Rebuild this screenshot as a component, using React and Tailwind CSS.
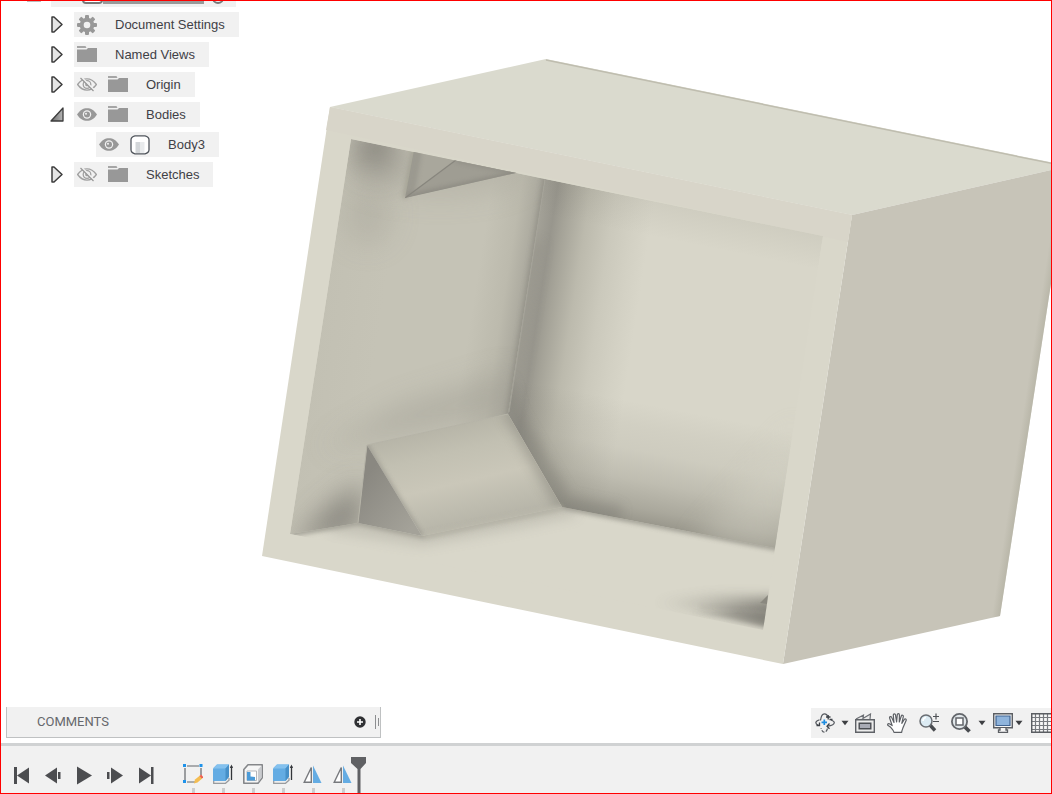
import React, { useState } from 'react';

const browserItems = [
  { name: 'Document Settings', icon: 'gear' },
  { name: 'Named Views', icon: 'folder' },
  { name: 'Origin', icon: 'folder', visible: false },
  { name: 'Bodies', icon: 'folder', visible: true, open: true },
  { name: 'Body3', icon: 'body', visible: true, child: true },
  { name: 'Sketches', icon: 'folder', visible: false },
];

const features = ['sketch', 'extrude', 'shell', 'extrude', 'mirror', 'mirror'];

function Svg({ w = 20, h = 20, label, children }) {
  return (
    <svg width={w} height={h} viewBox={`0 0 ${w} ${h}`} fill="none" className="shrink-0" role={label ? 'img' : undefined} aria-label={label} aria-hidden={label ? undefined : true}>
      {children}
    </svg>
  );
}

/* ---------- browser tree icons ---------- */

function Gear() {
  return (
    <Svg>
      <g fill="#989898">
        <rect x="8" y="0" width="4" height="20" rx="1" />
        <rect x="8" y="0" width="4" height="20" rx="1" transform="rotate(45 10 10)" />
        <rect x="8" y="0" width="4" height="20" rx="1" transform="rotate(90 10 10)" />
        <rect x="8" y="0" width="4" height="20" rx="1" transform="rotate(135 10 10)" />
        <circle cx="10" cy="10" r="7.3" />
      </g>
      <circle cx="10" cy="10" r="3.3" fill="#f1f1f1" />
    </Svg>
  );
}

function Folder() {
  return (
    <Svg>
      <path d="M0 1h8.500l1 2H0z" fill="#a6a6a6" />
      <path d="M0 4.500h9.500L11 3h9v14H0z" fill="#989898" />
    </Svg>
  );
}

function BodyIcon() {
  return (
    <Svg>
      <path d="M5 .8h10q4 1 4 4v10q0 3-4 4H5q-4-1-4-4v-10q0-3 4-4z" fill="#fff" stroke="#50555c" strokeWidth="1.300" />
      <path d="M5.500 7h5v11h-5z" fill="#d3d6d9" />
      <path d="M10.500 7h4v11h-4z" fill="#e9ebed" />
    </Svg>
  );
}

function Eye({ on }) {
  if (on) {
    return (
      <Svg label="Visible">
        <path d="M0 9.500C3 5 6 3.200 10 3.200s7 1.800 10 6.300c-3 4.500-6 6.300-10 6.300S3 14 0 9.500z" fill="#989898" />
        <circle cx="10" cy="9.500" r="4.200" fill="#f1f1f1" />
        <circle cx="10" cy="9.500" r="3" fill="#989898" />
        <circle cx="9" cy="8.800" r="1" fill="#f1f1f1" />
      </Svg>
    );
  }
  return (
    <Svg label="Hidden">
      <g stroke="#a0a0a0" strokeWidth="1.300">
        <path d="M.6 9.500C3.500 5.500 6.500 3.800 10 3.800s6.500 1.700 9.400 5.700c-2.900 4-5.900 5.700-9.400 5.700S3.500 13.500.6 9.500z" />
        <circle cx="10" cy="9.500" r="3.800" />
        <circle cx="10" cy="9.500" r="1.200" />
      </g>
      <path d="M5 3l13 13" stroke="#f1f1f1" strokeWidth="2" />
      <path d="M3.500 3l13 13" stroke="#989898" strokeWidth="1.300" />
    </Svg>
  );
}

function Disclosure({ open }) {
  return (
    <Svg w={14} h={18}>
      <defs>
        <linearGradient id="openFill" x1="0" y1="0" x2="1" y2="0">
          <stop offset="0" stopColor="#6b6b6b" />
          <stop offset="1" stopColor="#b5b5b5" />
        </linearGradient>
      </defs>
      {open ? (
        <path d="M13 2v13H1z" fill="url(#openFill)" stroke="#3c3c3c" strokeWidth="1.300" strokeLinejoin="round" />
      ) : (
        <path d="M2 1h2l8 7.500L4 16H2z" fill="#e4e4e4" stroke="#3c3c3c" strokeWidth="1.500" strokeLinejoin="round" />
      )}
    </Svg>
  );
}

const treeIcons = { gear: Gear, folder: Folder, body: BodyIcon };

function TreeRow({ item }) {
  const [open, setOpen] = useState(!!item.open);
  const [visible, setVisible] = useState(item.visible);
  const Icon = treeIcons[item.icon];
  return (
    <li className={`flex h-[25px] items-center ${item.child ? 'pl-[95px]' : 'gap-2.5 pl-[49px]'}`}>
      {!item.child && (
        <button type="button" aria-label={`Toggle ${item.name}`} aria-expanded={open} onClick={() => setOpen(!open)}>
          <Disclosure open={open} />
        </button>
      )}
      <div className="flex h-full items-center bg-[#f1f1f1] pr-3.5 pl-[3px]">
        {visible !== undefined && (
          <button type="button" className="mr-[11px]" aria-label={`Show or hide ${item.name}`} onClick={() => setVisible(!visible)}>
            <Eye on={visible} />
          </button>
        )}
        <Icon />
        <span className="ml-[18px] whitespace-nowrap">{item.name}</span>
      </div>
    </li>
  );
}

function Browser() {
  return (
    <ul className="relative -mt-[19px] flex flex-col gap-[5px] text-[13px] text-[#3f4046]" aria-label="Browser">
      {/* root component, scrolled mostly out of view */}
      <li className="flex h-[25px] items-end pl-[26px]">
        <span className="mb-[5px] h-3 w-3.5 bg-[#bdbdbd]" />
        <div className="ml-2.5 flex h-full w-[185px] items-end bg-[#f1f1f1] pb-[3px] pl-[31px]">
          <span className="h-5 w-[21px] rounded-b-sm border-2 border-[#777] bg-white" />
          <span className="h-5 w-[101px] bg-[#999]" />
          <span className="ml-2 h-3 w-3 rounded-full border-2 border-[#777]" />
        </div>
      </li>
      {browserItems.map((item) => <TreeRow key={item.name} item={item} />)}
    </ul>
  );
}

/* ---------- model ---------- */

function Model() {
  return (
    <svg className="absolute inset-0 h-full w-full" viewBox="1 1 1050 742" role="img" aria-label="Body3, open box with corner brackets">
      <defs>
        <clipPath id="opening"><path d="M351 139L823 236L763 630L290 534z" /></clipPath>
        <clipPath id="leftWall"><path d="M351 139L545 179L508 414L367 445L358 523L290 534z" /></clipPath>
        <clipPath id="backWall"><path d="M545 179L823 236L775 548L562 507L508 414z" /></clipPath>
        <clipPath id="ramp"><path d="M367 445L508 414L562 507L422 536z" /></clipPath>
        <clipPath id="rampSide"><path d="M367 445L422 536L358 523z" /></clipPath>
        <clipPath id="floor"><path d="M290 534L358 523L422 536L562 507L775 548L763 630z" /></clipPath>
        <clipPath id="bracket"><path d="M414 150L520 172L405 198z" /></clipPath>
        <filter id="b2" filterUnits="userSpaceOnUse" x="250" y="100" width="620" height="560"><feGaussianBlur stdDeviation="2" /></filter>
        <filter id="b6" filterUnits="userSpaceOnUse" x="250" y="100" width="620" height="560"><feGaussianBlur stdDeviation="6" /></filter>
        <filter id="b14" filterUnits="userSpaceOnUse" x="250" y="60" width="620" height="600"><feGaussianBlur stdDeviation="14" /></filter>
        <linearGradient id="leftFill" gradientUnits="userSpaceOnUse" x1="320" y1="300" x2="528" y2="333">
          <stop offset="0" stopColor="#c2c0b3" />
          <stop offset=".3" stopColor="#c5c3b6" />
          <stop offset=".72" stopColor="#c5c3b6" />
          <stop offset=".86" stopColor="#bcbaad" />
          <stop offset=".95" stopColor="#aba99e" />
          <stop offset="1" stopColor="#98968d" />
        </linearGradient>
        <linearGradient id="backFill" gradientUnits="userSpaceOnUse" x1="527" y1="297" x2="637" y2="314">
          <stop offset="0" stopColor="#a3a197" />
          <stop offset=".12" stopColor="#98968d" />
          <stop offset=".22" stopColor="#a5a398" />
          <stop offset=".42" stopColor="#bcbaad" />
          <stop offset=".65" stopColor="#cbc9bc" />
          <stop offset=".85" stopColor="#d3d1c4" />
          <stop offset="1" stopColor="#d8d6c9" />
        </linearGradient>
        <linearGradient id="backLow" gradientUnits="userSpaceOnUse" x1="668" y1="528" x2="690" y2="412">
          <stop offset="0" stopColor="#55534a" stopOpacity=".48" />
          <stop offset=".12" stopColor="#55534a" stopOpacity=".35" />
          <stop offset=".35" stopColor="#55534a" stopOpacity=".19" />
          <stop offset=".6" stopColor="#55534a" stopOpacity=".08" />
          <stop offset=".8" stopColor="#55534a" stopOpacity=".05" />
          <stop offset="1" stopColor="#55534a" stopOpacity="0" />
        </linearGradient>
        <linearGradient id="backTop" gradientUnits="userSpaceOnUse" x1="700" y1="210" x2="693" y2="245">
          <stop offset="0" stopColor="#55534a" stopOpacity=".07" />
          <stop offset="1" stopColor="#55534a" stopOpacity="0" />
        </linearGradient>
        <linearGradient id="rampFill" gradientUnits="userSpaceOnUse" x1="440" y1="428" x2="464" y2="530">
          <stop offset="0" stopColor="#b7b5a8" />
          <stop offset=".25" stopColor="#c2c0b2" />
          <stop offset=".55" stopColor="#cac7b9" />
          <stop offset=".8" stopColor="#bebcaf" />
          <stop offset="1" stopColor="#b5b3a7" />
        </linearGradient>
        <linearGradient id="sideFill" gradientUnits="userSpaceOnUse" x1="362" y1="480" x2="415" y2="525">
          <stop offset="0" stopColor="#8a8881" />
          <stop offset="1" stopColor="#a4a299" />
        </linearGradient>
        <linearGradient id="rightEdge" gradientUnits="userSpaceOnUse" x1="1025" y1="400" x2="1038" y2="402">
          <stop offset="0" stopColor="#b0ae9f" stopOpacity="0" />
          <stop offset="1" stopColor="#b0ae9f" />
        </linearGradient>
        <linearGradient id="cornerFade" gradientUnits="userSpaceOnUse" x1="650" y1="600" x2="766" y2="618">
          <stop offset="0" stopColor="#75736c" stopOpacity="0" />
          <stop offset=".5" stopColor="#75736c" stopOpacity=".35" />
          <stop offset="1" stopColor="#75736c" />
        </linearGradient>
      </defs>

      {/* outside faces */}
      <path d="M330 107L546 59L1069 166L852 215z" fill="#dadace" />
      <path d="M546 60L1069 167" stroke="#bfbdaf" strokeWidth="1.500" />
      <path d="M852 215L1069 166L1000 616L783 664z" fill="#c7c4b8" />
      <path d="M1050 170L1069 166L1000 616L981 620z" fill="url(#rightEdge)" />
      <path d="M330 107L852 215L783 664L262 556z" fill="#d9d7ca" />
      <path d="M330 107L852 215L848 242L326 130z" fill="#d8d5c9" />

      {/* inside of the box */}
      <g clipPath="url(#opening)">
        <path d="M351 139L823 236L763 630L290 534z" fill="#d9d7ca" />
        <g clipPath="url(#backWall)">
          <path d="M480 160H840V640H480z" fill="url(#backFill)" />
          <path d="M480 160H840V280H480z" fill="url(#backTop)" />
          <path d="M480 350H840V640H480z" fill="url(#backLow)" />
          <path d="M800 420L778 570L690 545z" fill="#d3d1c4" opacity=".35" filter="url(#b14)" />
          <path d="M534 240L506 412" stroke="#8a8880" strokeWidth="20" opacity=".3" filter="url(#b6)" />
          <path d="M500 380L508 414L562 507L620 518" stroke="#7c7a73" strokeWidth="24" fill="none" opacity=".4" filter="url(#b6)" />
        </g>
        <g clipPath="url(#leftWall)">
          <path d="M280 130H560V540H280z" fill="url(#leftFill)" />
          <ellipse cx="376" cy="150" rx="22" ry="24" fill="#7e7c75" opacity=".85" filter="url(#b14)" />
          <ellipse cx="368" cy="215" rx="24" ry="30" fill="#a5a398" opacity=".4" filter="url(#b14)" />
          <ellipse cx="440" cy="170" rx="90" ry="26" fill="#a5a398" opacity=".4" filter="url(#b14)" />
          <path d="M320 450L510 412L514 370L400 405z" fill="#99978d" opacity=".42" filter="url(#b14)" />
          <path d="M290 550L360 530L364 480L325 510z" fill="#77756e" opacity=".8" filter="url(#b14)" />
          <path d="M405 198L414 150" stroke="#999789" strokeWidth="5" opacity=".6" filter="url(#b2)" />
          <path d="M546 172L508 416" stroke="#86847c" strokeWidth="6" opacity=".45" filter="url(#b2)" />
        </g>
        <path d="M545 179L509 412" stroke="#a5a399" />
        <g clipPath="url(#bracket)">
          <path d="M414 150L520 172L405 198z" fill="#a9a79c" />
          <path d="M416 150L408 196" stroke="#8d8b83" strokeWidth="12" opacity=".5" filter="url(#b2)" />
          <path d="M456 160L520 173L405 198z" fill="#9f9d93" />
          <path d="M520 173L405 198" stroke="#85837b" strokeWidth="6" opacity=".6" filter="url(#b2)" />
          <path d="M456 160L520 173" stroke="#85837b" strokeWidth="4" opacity=".5" filter="url(#b2)" />
          <path d="M456 160L405 198" stroke="#88867e" strokeWidth="1.300" />
        </g>
        <g clipPath="url(#floor)">
          <path d="M285 533L358 521L422 534L562 505L785 548" stroke="#99978d" strokeWidth="9" fill="none" opacity=".8" filter="url(#b2)" />
          <path d="M330 524L422 538L520 520L575 508" stroke="#a8a69b" strokeWidth="16" fill="none" opacity=".4" filter="url(#b6)" />
        </g>
        <g clipPath="url(#ramp)">
          <path d="M360 400H570V540H360z" fill="url(#rampFill)" />
          <path d="M512 408L570 510" stroke="#8a887f" strokeWidth="22" opacity=".55" filter="url(#b6)" />
          <path d="M365 445L420 536" stroke="#939188" strokeWidth="7" opacity=".6" filter="url(#b2)" />
        </g>
        <path d="M425 536L562 508" stroke="#bdbbae" strokeWidth="6" opacity=".7" filter="url(#b2)" />
        <g clipPath="url(#rampSide)">
          <path d="M355 440H425V540H355z" fill="url(#sideFill)" />
        </g>
        <path d="M358 523L367 445L508 414" stroke="#b5b3a7" fill="none" />
        {/* shadow of the bracket hidden behind the front frame */}
        <path d="M650 602L710 596L790 598L790 628L740 619z" fill="url(#cornerFade)" opacity=".75" filter="url(#b6)" />
        <path d="M690 612L740 611L785 617L766 627L725 618z" fill="url(#cornerFade)" opacity=".6" filter="url(#b2)" />
        <path d="M700 607L775 609" stroke="url(#cornerFade)" strokeWidth="3" opacity=".4" filter="url(#b2)" />
        <path d="M760 603L768 595L767 604z" fill="#8a887f" />
      </g>
    </svg>
  );
}

/* ---------- navigation bar ---------- */

function OrbitIcon() {
  return (
    <Svg>
      <g stroke="#55595f" strokeWidth="1.200">
        <path d="M5.500 7.500C6 3.500 7.300.8 9.300.8s3.400 1.700 3.900 4" />
        <path d="M12.500 15.500c-.7 2.400-1.800 3.700-3.200 3.700-1.500 0-2.600-1.500-3.300-4" strokeDasharray="3.500 1.500" />
        <path d="M4.500 6.800C2 7.600.8 8.600.8 9.800c0 1.200 1.200 2 2.700 2.600" />
        <path d="M16 7c2 .7 3.300 1.600 3.300 2.600 0 1.800-3.200 3.200-7 3.600" />
      </g>
      <path d="M1.500 12.500h3v-3M14.500 10.500L12 13.200l2.500 2.600M11 4h4.500M13.200 2v4.500M14.500 6.500h3" stroke="#3d4147" strokeWidth="1.300" />
      <path d="M9.300 6.500v5.500M6.500 9.300h5.500" stroke="#1f8de0" strokeWidth="1.700" />
    </Svg>
  );
}

function LookAtIcon() {
  return (
    <Svg>
      <path d="M1 6L8.500 2 8 6M7 6l8.500-5L15 6" fill="#e9e9e9" stroke="#6b6e73" strokeWidth="1.200" />
      <path d="M.7 6.700h18.600v12.600H.7z" fill="#ececec" stroke="#5f6267" strokeWidth="1.400" />
      <path d="M4.200 10.200h11.600v5.600H4.200z" fill="#a9abb5" stroke="#4a4d52" strokeWidth="1.400" />
    </Svg>
  );
}

function PanIcon() {
  return (
    <Svg>
      <path d="M7 19.300c-.5-2-2-3.500-3.300-5L.8 12.200c-.6-1.300.9-1.900 2-1.200l2.400 1.600L2.600 5c-.3-1.500 1.500-2 2-.7L7 9.500 6.300 2C6.300.5 8.300.4 8.500 1.900L9.600 9l.7-7.300c.2-1.400 2.100-1.300 2.100.2L12.300 9l2-6c.5-1.300 2.300-.8 2 .6l-1.500 6.700 2.500-3.800c.8-1.200 2.300-.2 1.800 1l-2.900 6.800c-.6 1.700-1.400 3-1.500 5z" fill="#fff" stroke="#5d6065" strokeWidth="1.200" strokeLinejoin="round" />
    </Svg>
  );
}

function ZoomIcon() {
  return (
    <Svg>
      <path d="M11 12l5 5.500" stroke="#494c50" strokeWidth="3.400" />
      <circle cx="7" cy="8" r="6" fill="#dcebf3" stroke="#6a6e73" strokeWidth="1.500" />
      <path d="M4 8a3.500 3.500 0 0 1 3-3.500" stroke="#fff" strokeWidth="1.600" />
      <path d="M17 .5v6M14 3.500h6M14 8.500h6" stroke="#4f5256" strokeWidth="1.200" />
    </Svg>
  );
}

function FitIcon() {
  return (
    <Svg>
      <path d="M14 14l4.500 4.500" stroke="#494c50" strokeWidth="3.800" />
      <circle cx="8.500" cy="8.500" r="7.600" fill="#e1e7ea" stroke="#63666b" strokeWidth="1.800" />
      <path d="M5 5h7v7H5z" fill="#fff" stroke="#63666b" strokeWidth="1.500" />
    </Svg>
  );
}

function DisplayIcon() {
  return (
    <Svg>
      <path d="M.7.700h18.600v14H.7z" fill="#f4f4f4" stroke="#5b5e63" strokeWidth="1.400" />
      <path d="M3 3h14v9.500H3z" fill="#8fb4dc" stroke="#416491" strokeWidth="1.200" />
      <path d="M7 15v2H5.500v2.300h9V17H13v-2" fill="#f4f4f4" stroke="#5b5e63" strokeWidth="1.300" />
    </Svg>
  );
}

function GridIcon() {
  return (
    <Svg>
      <path d="M.7.700H20v18.600H.7z" fill="#f8f8f8" />
      <path d="M4.500 1v18M8.500 1v18M12.500 1v18M16.500 1v18M1 4.500h19M1 8.500h19M1 12.500h19M1 16.500h19" stroke="#777a7f" strokeWidth="1.200" />
      <path d="M20 .7H.7v18.600H20" stroke="#5b5e63" strokeWidth="1.500" />
    </Svg>
  );
}

function Caret() {
  return <Svg w={8} h={6}><path d="M.5.800h7L4 5.300z" fill="#3d3f42" /></Svg>;
}

function NavBar() {
  return (
    <div role="toolbar" aria-label="Navigation" className="flex h-[30px] items-center bg-[#f1f1f1] pl-1">
      <button type="button" aria-label="Orbit"><OrbitIcon /></button>
      <button type="button" aria-label="Orbit options" className="flex w-5 justify-center"><Caret /></button>
      <div className="flex gap-3">
        <button type="button" aria-label="Look at"><LookAtIcon /></button>
        <button type="button" aria-label="Pan"><PanIcon /></button>
        <button type="button" aria-label="Zoom"><ZoomIcon /></button>
        <button type="button" aria-label="Fit"><FitIcon /></button>
      </div>
      <button type="button" aria-label="Zoom options" className="flex w-[22px] justify-center"><Caret /></button>
      <button type="button" aria-label="Display settings"><DisplayIcon /></button>
      <button type="button" aria-label="Display options" className="flex w-3 justify-center"><Caret /></button>
      <button type="button" aria-label="Grid and snaps" className="ml-1.5"><GridIcon /></button>
    </div>
  );
}

function Comments() {
  return (
    <div className="flex h-[31px] w-[375px] items-center border-r border-b border-l border-[#bfc1c2] bg-[#f1f1f1] pl-[30px]">
      <h2 className="flex-1 font-[Roboto,sans-serif] text-[13px] text-[#66686c]">COMMENTS</h2>
      <button type="button" aria-label="Add comment" className="mr-2">
        <Svg w={12} h={12}>
          <circle cx="6" cy="6" r="5.700" fill="#2f3033" />
          <path d="M6 3v6M3 6h6" stroke="#fff" strokeWidth="1.600" />
        </Svg>
      </button>
      <Svg w={6} h={14}>
        <path d="M1.500 0v14M4.500 3v8" stroke="#8c8e90" />
      </Svg>
    </div>
  );
}

/* ---------- timeline ---------- */

const playback = [
  { label: 'Go to start', d: 'M2 1h3v17H2zM5 9.500L17 1.500v16z' },
  { label: 'Step back', d: 'M2 9.500L14 1.500v16zM15 6h2.500v7H15z' },
  { label: 'Play', d: 'M3 .5l15 9-15 9z' },
  { label: 'Step forward', d: 'M2 6h2.500v7H2zM6 1.500l12 8-12 8z' },
  { label: 'Go to end', d: 'M3 1.500l12 8-12 8zM15 1h2.500v17H15z' },
];

function FeatureIcon({ type }) {
  if (type === 'sketch') {
    return (
      <Svg>
        <path d="M4 2h12M2 4v12M18 4v7M4 18h8" stroke="#63666a" strokeWidth="1.200" />
        <path d="M0 0h3v3H0zM16.500 0h3v3h-3zM0 16h3v3H0z" fill="#1f93ea" />
        <path d="M11 19.500l1-4 5-4 2.500 2.800-5 4.200z" fill="#f4bd51" />
        <path d="M16.500 12l1.700-1.500 2 2.500-1.400 1.600z" fill="#ee5f50" />
      </Svg>
    );
  }
  if (type === 'extrude') {
    return (
      <Svg>
        <path d="M.7 17v2.300h11.800l3.500-3V14" fill="#eee" stroke="#999b9e" strokeWidth="1.300" />
        <path d="M0 4.500L4 .5h12v12.200L12.500 17H0z" fill="#64ace3" />
        <path d="M0 4.500L4 .5h12l-3.500 4z" fill="#84c1ee" />
        <path d="M12.500 4.500L16 .5v12.200L12.500 17z" fill="#4790c8" />
        <path d="M18.500 16V2" stroke="#34363a" strokeWidth="1.300" />
        <path d="M16.800 4l1.700-3.500L20 4z" fill="#34363a" />
      </Svg>
    );
  }
  if (type === 'shell') {
    return (
      <Svg>
        <path d="M.8 5.500L5 .8h14.200v13L15 19.200H.8z" fill="#f6f6f6" stroke="#85878a" strokeWidth="1.600" strokeLinejoin="round" />
        <path d="M15 5.500l3.700-4v12L15 18.500z" fill="#c9cbce" />
        <path d="M4 7h9.500v9.500H4z" fill="#fff" stroke="#b5b7ba" />
        <path d="M4 8h3.500v4.500l4.500.5v3.500H4z" fill="#4b9bd8" />
      </Svg>
    );
  }
  return (
    <Svg>
      <path d="M8.300 3.500v14.700H1.200z" fill="#fff" stroke="#77797d" strokeWidth="1.400" />
      <path d="M10 1.500L18.500 19H10z" fill="#64ace3" />
    </Svg>
  );
}

function Timeline() {
  return (
    <footer className="flex h-[50px] shrink-0 border-t-[3px] border-[#d0d2d3] bg-[#f1f1f1] pl-[11px]">
      <div className="flex items-center gap-[11px] pt-3" role="group" aria-label="Playback">
        {playback.map((p) => (
          <button type="button" key={p.label} aria-label={p.label}>
            <Svg><path d={p.d} fill="#4c4d50" /></Svg>
          </button>
        ))}
      </div>
      <ol className="ml-[27px] flex gap-2.5 pt-[18px]">
        {features.map((type, i) => (
          <li key={i} className="flex flex-col items-center justify-between">
            <button type="button" aria-label={`${type} ${i + 1}`}><FeatureIcon type={type} /></button>
            <span className="h-[5px] w-[3px] bg-[#cdcdcd]" />
          </li>
        ))}
      </ol>
      <div className="-ml-0.5 flex flex-col justify-end">
        <Svg w={15} h={36}>
          <path d="M0 0h15v6l-5.500 6v24h-3V12L0 6z" fill="#606164" />
        </Svg>
      </div>
    </footer>
  );
}

export default function App() {
  return (
    <div className="flex h-screen flex-col overflow-hidden border border-[#ff0000] bg-white font-['Liberation_Sans',Arial,sans-serif]">
      <main className="relative flex flex-1 flex-col justify-between overflow-hidden">
        <Model />
        <Browser />
        <div className="relative flex items-end justify-between pb-[5px] pl-[5px]">
          <Comments />
          <NavBar />
        </div>
      </main>
      <Timeline />
    </div>
  );
}
